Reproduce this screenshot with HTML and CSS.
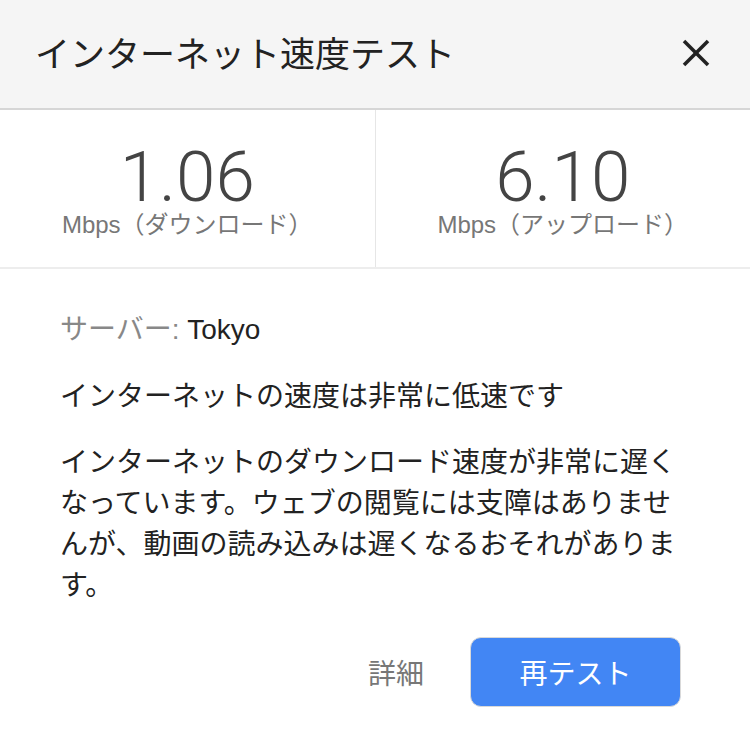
FILE: index.html
```html
<!DOCTYPE html>
<html lang="ja">
<head>
    <meta charset="UTF-8">
    <meta name="viewport" content="width=device-width, initial-scale=1.0">
    <title>インターネット速度テスト</title>
    <link rel="stylesheet" href="styles.css">
</head>
<body>
    <div class="header">
        <h1>インターネット速度テスト</h1>
        <button class="close" aria-label="閉じる">
            <svg width="28" height="28" viewBox="0 0 28 28">
                <line x1="2" y1="2" x2="26" y2="26" stroke="#222" stroke-width="3.6"/>
                <line x1="26" y1="2" x2="2" y2="26" stroke="#222" stroke-width="3.6"/>
            </svg>
        </button>
    </div>

    <div class="stats">
        <div class="stat">
            <div class="value">1.06</div>
            <div class="unit">Mbps（ダウンロード）</div>
        </div>
        <div class="stat">
            <div class="value">6.10</div>
            <div class="unit">Mbps（アップロード）</div>
        </div>
    </div>

    <div class="content">
        <p class="server"><span class="label">サーバー:</span> Tokyo</p>
        <p class="summary">インターネットの速度は非常に低速です</p>
        <p class="detail">インターネットのダウンロード速度が非常に遅くなっています。ウェブの閲覧には支障はありませんが、動画の読み込みは遅くなるおそれがあります。</p>
    </div>

    <div class="actions">
        <button class="link">詳細</button>
        <button class="primary">再テスト</button>
    </div>
</body>
</html>
```

FILE: styles.css
```css
body {
    margin: 0;
    font-family: "Liberation Sans", "Noto Sans CJK JP", sans-serif;
    color: #222;
    background-color: #fff;
}
.header {
    display: flex;
    align-items: center;
    justify-content: space-between;
    height: 108px;
    padding: 0 40px 0 35px;
    background-color: #f5f5f5;
    border-bottom: 2px solid #d6d6d6;
}
.header h1 {
    margin: 0;
    font-size: 35px;
    font-weight: normal;
    line-height: 1;
    color: #222;
}
.close {
    display: flex;
    padding: 0;
    margin-top: -2px;
    background: none;
    border: none;
    cursor: pointer;
}
.stats {
    display: flex;
    height: 157px;
    border-bottom: 2px solid #ededed;
}
.stat {
    flex: 1;
    display: flex;
    flex-direction: column;
    align-items: center;
    padding-top: 36px;
}
.stat + .stat {
    border-left: 1px solid #e6e6e6;
}
.value {
    font-family: Roboto, "Liberation Sans", sans-serif;
    font-weight: 300;
    font-size: 71px;
    line-height: 61px;
    color: #444;
}
.unit {
    margin-top: 4px;
    font-size: 24px;
    line-height: 28px;
    color: #777;
}
.content {
    padding: 40px 60px 0;
}
.content p {
    margin: 0;
    font-size: 28px;
    line-height: 41px;
}
.server .label {
    color: #888;
}
.summary {
    margin-top: 26px !important;
}
.detail {
    margin-top: 25px !important;
}
.actions {
    display: flex;
    justify-content: flex-end;
    align-items: center;
    gap: 46px;
    padding: 31px 69px 0 0;
}
.actions button {
    font-family: inherit;
    font-size: 28px;
    cursor: pointer;
}
.link {
    padding: 0;
    background: none;
    border: none;
    color: #777;
}
.primary {
    width: 211px;
    height: 70px;
    background-color: #4286f4;
    color: #fff;
    border: 1px solid #d9d9d9;
    border-radius: 11px;
}
```
